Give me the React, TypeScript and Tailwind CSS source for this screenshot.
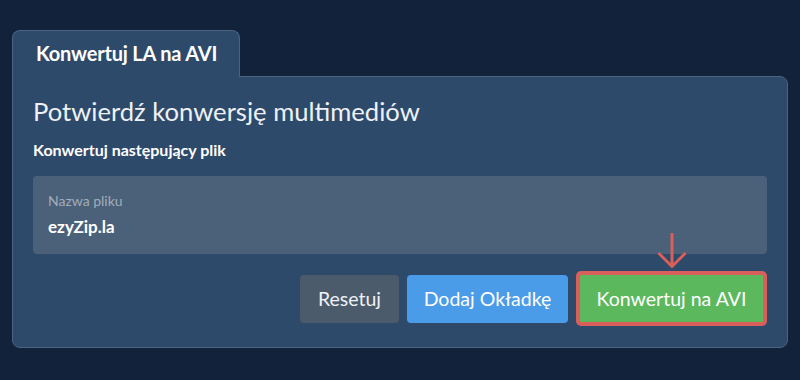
import React from "react";

export default function App() {
  return (
    <div
      className="w-[800px] h-[380px] bg-[#11223a] pt-[30px] px-[12px]"
      style={{ fontFamily: "Lato, 'Noto Sans', sans-serif" }}
    >
      <div className="relative z-10 -mb-px flex h-[47px] w-[228px] items-start rounded-t-[8px] border border-b-0 border-[#4a6383] bg-[#2d4a6b] pl-[23px] pt-[10px]">
        <span className="text-[20px] leading-[24px] font-bold text-white tracking-[-0.2px]">Konwertuj LA na AVI</span>
      </div>
      <div className="h-[272px] rounded-b-[8px] rounded-tr-[8px] border border-[#4a6383] bg-[#2d4a6b] px-[20px] pt-[18px]">
        <h1 className="text-[25.6px] leading-[32px] text-[#eef1f5]">Potwierdź konwersję multimediów</h1>
        <p className="mt-[13px] text-[16px] font-bold leading-[20px] text-white">Konwertuj następujący plik</p>
        <div className="mt-[16px] h-[78px] rounded-[4px] bg-[#4b6079] px-[15px] pt-[16px]">
          <div className="text-[14px] leading-[17px] text-[#a3adba]">Nazwa pliku</div>
          <div className="mt-[8px] text-[17px] font-bold leading-[20px] text-white">ezyZip.la</div>
        </div>
        <div className="mt-[17px] flex items-center justify-end gap-[8px]">
          <button className="h-[48px] w-[99px] rounded-[4px] bg-[#4b5b6c] text-[19.5px] text-[#eef1f5]">Resetuj</button>
          <button className="h-[48px] w-[161px] rounded-[4px] bg-[#4a9be8] text-[19.5px] text-white">Dodaj Okładkę</button>
          <div className="relative">
            <svg className="absolute left-[81px] -top-[40px]" width="30" height="38" viewBox="0 0 30 38" fill="none">
              <path d="M15 2 V35 M1.5 22 L15 35.5 L28.5 22" stroke="#d9605a" strokeWidth="3" />
            </svg>
            <button className="h-[55px] w-[191px] rounded-[5px] border-[4px] border-[#d9605a] bg-[#5cb85c] text-[19.5px] text-white">Konwertuj na AVI</button>
          </div>
        </div>
      </div>
    </div>
  );
}
